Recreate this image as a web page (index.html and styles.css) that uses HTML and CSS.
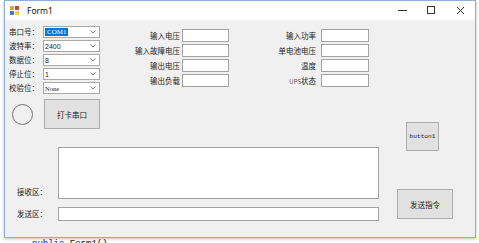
FILE: index.html
```html
<!DOCTYPE html>
<html lang="zh-CN">
<head>
    <meta charset="UTF-8">
    <title>Form1</title>
    <link rel="stylesheet" href="styles.css">
</head>
<body>
    <div class="window">
        <!-- TITLE BAR -->
        <div class="titlebar">
            <svg class="app-icon" width="9" height="9" viewBox="0 0 9 9">
                <rect x="0" y="0" width="4" height="4" fill="#e8a33c"/>
                <rect x="5" y="0" width="4" height="4" fill="#c94b3a"/>
                <rect x="0" y="5" width="4" height="4" fill="#4a78c2"/>
                <rect x="5" y="5" width="4" height="4" fill="#f2d24b"/>
            </svg>
            <span class="title">Form1</span>
            <div class="win-controls">
                <span class="ctl"><svg width="9" height="9"><line x1="0" y1="4.5" x2="9" y2="4.5" stroke="#333" stroke-width="1"/></svg></span>
                <span class="ctl"><svg width="9" height="9"><rect x="0.5" y="0.5" width="7" height="7" fill="none" stroke="#333"/></svg></span>
                <span class="ctl"><svg width="9" height="9"><path d="M1 1L8 8M8 1L1 8" stroke="#333" stroke-width="1"/></svg></span>
            </div>
        </div>

        <!-- CLIENT AREA -->
        <div class="client">
            <div class="main">
                <div class="top">
                    <div class="port-group">
                        <div class="field-grid">
                            <span class="lbl">串口号：</span>
                            <div class="combo"><span class="sel">COM1</span><svg class="arrow" width="6" height="4"><path d="M0.5 0.5L3 3L5.5 0.5" fill="none" stroke="#777"/></svg></div>
                            <span class="lbl">波特率：</span>
                            <div class="combo"><span>2400</span><svg class="arrow" width="6" height="4"><path d="M0.5 0.5L3 3L5.5 0.5" fill="none" stroke="#777"/></svg></div>
                            <span class="lbl">数据位：</span>
                            <div class="combo"><span>8</span><svg class="arrow" width="6" height="4"><path d="M0.5 0.5L3 3L5.5 0.5" fill="none" stroke="#777"/></svg></div>
                            <span class="lbl">停止位：</span>
                            <div class="combo"><span>1</span><svg class="arrow" width="6" height="4"><path d="M0.5 0.5L3 3L5.5 0.5" fill="none" stroke="#777"/></svg></div>
                            <span class="lbl">校验位：</span>
                            <div class="combo"><span class="serif">None</span><svg class="arrow" width="6" height="4"><path d="M0.5 0.5L3 3L5.5 0.5" fill="none" stroke="#777"/></svg></div>
                        </div>
                        <div class="open-row">
                            <div class="led"></div>
                            <button class="btn open-btn">打卡串口</button>
                        </div>
                    </div>

                    <div class="value-group mid">
                        <span class="lbl">输入电压</span><div class="box"></div>
                        <span class="lbl">输入故障电压</span><div class="box"></div>
                        <span class="lbl">输出电压</span><div class="box"></div>
                        <span class="lbl">输出负载</span><div class="box"></div>
                    </div>

                    <div class="value-group right">
                        <span class="lbl">输入功率</span><div class="box"></div>
                        <span class="lbl">单电池电压</span><div class="box"></div>
                        <span class="lbl">温度</span><div class="box"></div>
                        <span class="lbl"><span class="small">UPS</span>状态</span><div class="box"></div>
                    </div>
                </div>

                <div class="bottom">
                    <span class="lbl recv-lbl">接收区：</span>
                    <div class="box recv-box"></div>
                    <span class="lbl">发送区：</span>
                    <div class="box send-box"></div>
                </div>
            </div>

            <div class="side">
                <button class="btn btn-one">button1</button>
                <button class="btn send-btn">发送指令</button>
            </div>
        </div>
    </div>

    <div class="code-line"><span class="kw">public</span> Form1()</div>
</body>
</html>
```

FILE: styles.css
```css
body {
    margin: 0;
    width: 479px;
    height: 243px;
    overflow: hidden;
    background-color: #ffffff;
    font-family: "Noto Sans CJK SC", "Noto Sans", sans-serif;
    color: #222;
}
.window {
    margin-left: 4px;
    width: 470px;
    border: 1px solid #8aaed6;
    box-shadow: 0 1px 3px rgba(0,0,0,0.25);
}
.titlebar {
    height: 19px;
    background-color: #fff;
    display: flex;
    align-items: center;
}
.app-icon {
    margin-left: 5px;
}
.title {
    margin-left: 8px;
    font-family: "Noto Sans", sans-serif;
    font-size: 8.5px;
    color: #111;
}
.win-controls {
    margin-left: auto;
    display: flex;
}
.ctl {
    width: 29px;
    height: 19px;
    display: flex;
    align-items: center;
    justify-content: center;
}
.client {
    height: 217px;
    background-color: #f0f0f0;
    display: flex;
}
.main {
    width: 376px;
    padding: 6px 0 0 4px;
}
.top {
    display: flex;
    align-items: flex-start;
    height: 103px;
}
.lbl {
    font-size: 7.5px;
    line-height: 12px;
    white-space: nowrap;
}
.small {
    font-size: 6px;
    color: #555;
}
.port-group {
    width: 91px;
}
.field-grid {
    display: grid;
    grid-template-columns: 34px 57px;
    grid-auto-rows: 12px;
    row-gap: 2px;
}
.combo {
    box-sizing: border-box;
    background-color: #fff;
    border: 1px solid #a9a9a9;
    display: flex;
    align-items: center;
    padding-left: 1px;
    font-family: "Liberation Sans", sans-serif;
    font-size: 7px;
}
.combo .serif {
    font-family: "Liberation Serif", serif;
    font-size: 6.5px;
}
.combo .sel {
    background-color: #0078d7;
    color: #fff;
    padding: 0 2px;
    line-height: 8px;
    font-family: "Liberation Serif", serif;
}
.arrow {
    margin-left: auto;
    margin-right: 3px;
}
.open-row {
    display: flex;
    align-items: center;
    margin-top: 5px;
}
.led {
    width: 19px;
    height: 19px;
    border: 1px solid #6f6f6f;
    border-radius: 50%;
    margin-left: 3px;
}
.btn {
    box-sizing: border-box;
    background-color: #e1e1e1;
    border: 1px solid #adadad;
    font-family: "Noto Sans CJK SC", sans-serif;
    font-size: 7.5px;
    color: #222;
    padding: 0;
}
.open-btn {
    width: 56px;
    height: 30px;
    margin-left: 11px;
}
.value-group {
    display: grid;
    grid-auto-rows: 13px;
    row-gap: 2px;
    margin-top: 3px;
}
.value-group .lbl {
    text-align: right;
    line-height: 13px;
}
.mid {
    grid-template-columns: 80px 47px;
    column-gap: 2px;
}
.right {
    grid-template-columns: 87px 48px;
    column-gap: 5px;
}
.box {
    box-sizing: border-box;
    background-color: #fff;
    border: 1px solid #a3a3a3;
}
.bottom {
    display: grid;
    grid-template-columns: 41px 321px;
    grid-template-rows: 52px 14px;
    row-gap: 8px;
    margin-top: 18px;
    padding-left: 8px;
}
.bottom .lbl {
    align-self: center;
}
.bottom .recv-lbl {
    align-self: end;
    padding-bottom: 1px;
}
.side {
    display: flex;
    flex-direction: column;
    align-items: flex-start;
}
.btn-one {
    width: 33px;
    height: 29px;
    margin: 102px 0 0 21px;
    font-family: "Liberation Mono", monospace;
    font-size: 6.2px;
}
.send-btn {
    width: 56px;
    height: 30px;
    margin: 38px 0 0 12px;
}
.code-line {
    margin: 1px 0 0 32px;
    font-family: "Liberation Mono", monospace;
    font-size: 9px;
    line-height: 10px;
    color: #111;
}
.kw {
    color: #2020d0;
}
```
